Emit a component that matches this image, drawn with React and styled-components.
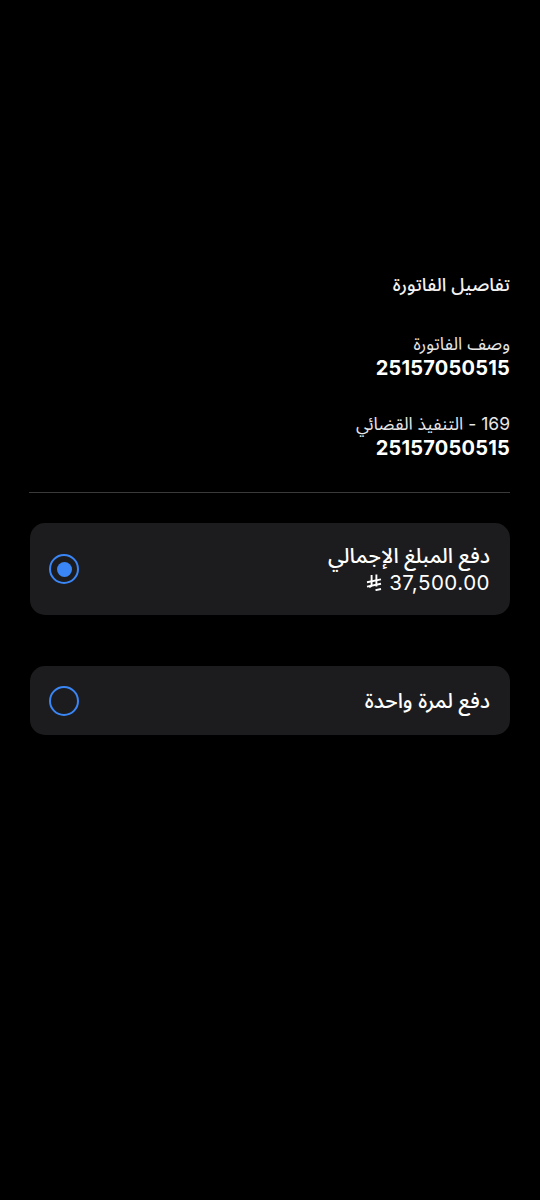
import React from "react";
import styled, { createGlobalStyle } from "styled-components";

const Global = createGlobalStyle`
  html, body { margin: 0; padding: 0; background: #000; }
  body { font-family: Inter, "Noto Sans Arabic", "DejaVu Sans", sans-serif; color: #fff; }
  * { box-sizing: border-box; }
`;

const Page = styled.div`
  width: 540px;
  min-height: 1200px;
  background: #000;
  direction: rtl;
  padding: 272px 30px 0 30px;
  display: flex;
  flex-direction: column;
`;

const Title = styled.div`
  font-size: 18.5px;
  line-height: 24px;
  font-weight: 500;
  color: #f2f2f2;
`;

const Field = styled.div`
  display: flex;
  flex-direction: column;
  margin-top: ${(p) => p.$top}px;
`;

const Label = styled.div`
  font-size: 17.5px;
  line-height: 24px;
  font-weight: 400;
  color: #e6e6e6;
`;

const Value = styled.div`
  font-size: 20px;
  line-height: 25px;
  font-weight: 700;
  color: #fff;
  letter-spacing: 0.2px;
`;

const Divider = styled.div`
  height: 1px;
  background: #3a3a3c;
  margin-top: 31px;
  margin-left: -1px;
`;

const Card = styled.div`
  margin-top: ${(p) => p.$top}px;
  background: #1c1c1e;
  border-radius: 15px;
  height: ${(p) => p.$h}px;
  padding: 0 20px 0 19px;
  display: flex;
  align-items: center;
  justify-content: space-between;
`;

const CardText = styled.div`
  display: flex;
  flex-direction: column;
`;

const CardTitle = styled.div`
  font-size: 21px;
  line-height: 26px;
  font-weight: 500;
  color: #fff;
`;

const Amount = styled.div`
  direction: ltr;
  display: flex;
  align-items: center;
  justify-content: flex-end;
  gap: 7px;
  font-size: 20.5px;
  line-height: 27px;
  font-weight: 400;
  letter-spacing: 0.5px;
  color: #fff;
`;

const Radio = styled.div`
  width: 30px;
  height: 30px;
  border-radius: 50%;
  border: 2.5px solid #3a86f6;
  display: flex;
  align-items: center;
  justify-content: center;
  flex-shrink: 0;
  &::after {
    content: "";
    display: ${(p) => (p.$checked ? "block" : "none")};
    width: 15px;
    height: 15px;
    border-radius: 50%;
    background: #3a86f6;
  }
`;

const Riyal = () => (
  <svg width="16" height="17" viewBox="0 0 16 17" fill="none" stroke="#fff" strokeWidth="1.9" strokeLinecap="butt">
    <path d="M5.6 1 V10.5 Q5.6 12.4 3.2 13" />
    <path d="M10.4 0.5 V12.5" />
    <path d="M1 8.2 L15 5.4" />
    <path d="M1 12.6 L15 9.8" />
    <path d="M9.5 16.2 L15 15" />
  </svg>
);

export default function App() {
  return (
    <>
      <Global />
      <Page>
        <Title>تفاصيل الفاتورة</Title>
        <Field $top={36}>
          <Label>وصف الفاتورة</Label>
          <Value>25157050515</Value>
        </Field>
        <Field $top={31}>
          <Label>169 - التنفيذ القضائي</Label>
          <Value>25157050515</Value>
        </Field>
        <Divider />
        <Card $top={30} $h={92}>
          <CardText>
            <CardTitle>دفع المبلغ الإجمالي</CardTitle>
            <Amount>
              <Riyal />
              <span>37,500.00</span>
            </Amount>
          </CardText>
          <Radio $checked />
        </Card>
        <Card $top={51} $h={69}>
          <CardText>
            <CardTitle>دفع لمرة واحدة</CardTitle>
          </CardText>
          <Radio />
        </Card>
      </Page>
    </>
  );
}
